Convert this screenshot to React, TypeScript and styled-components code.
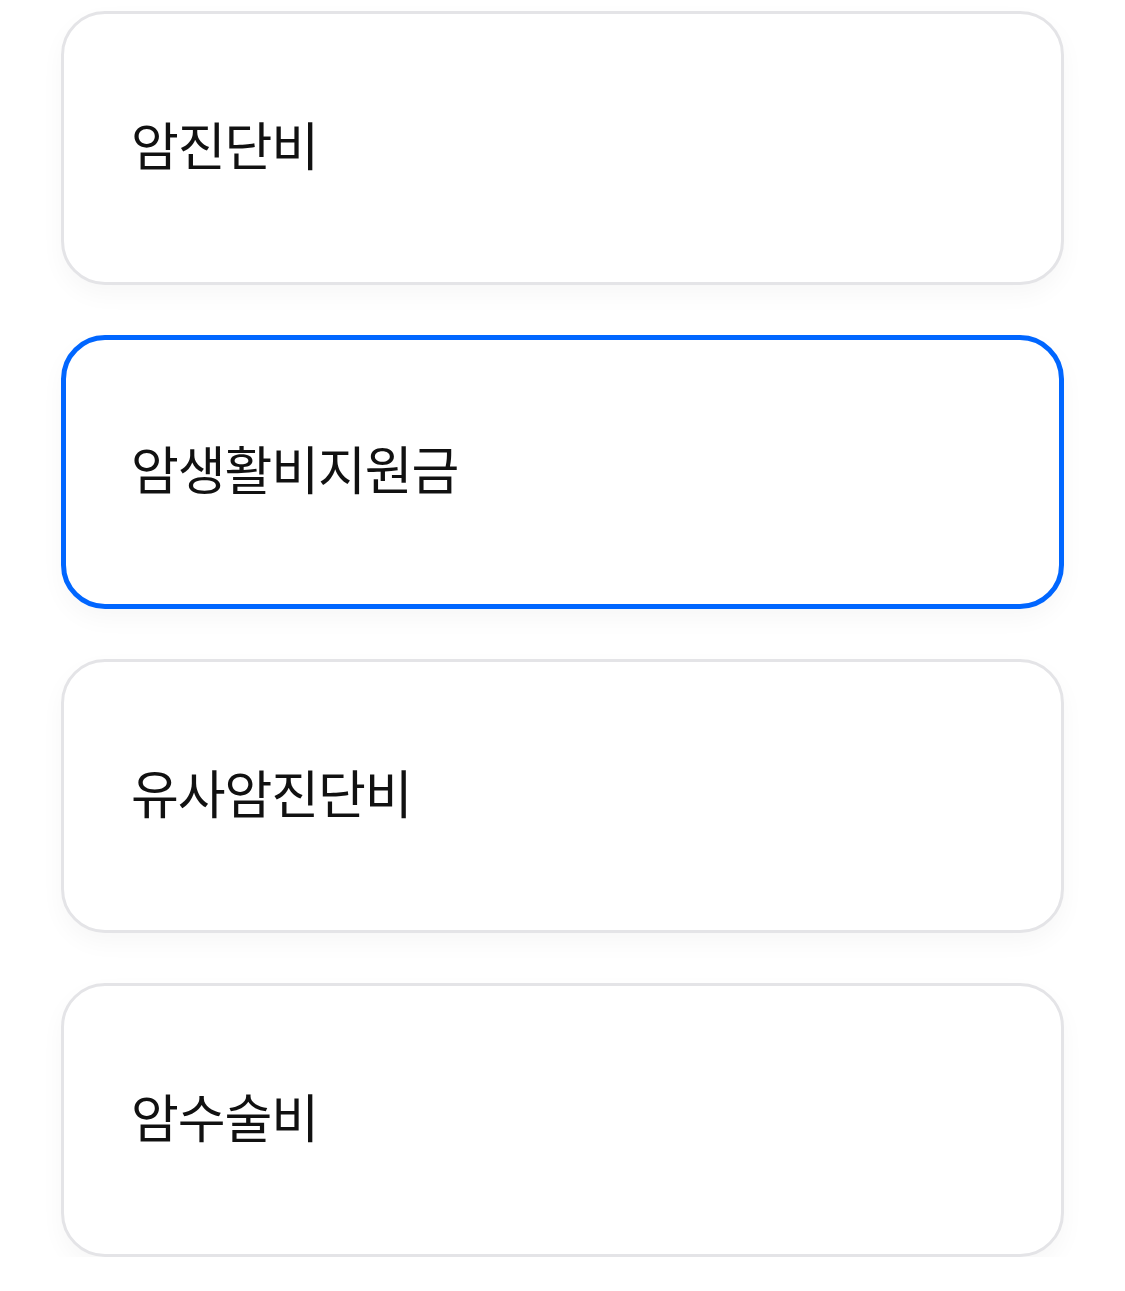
import React from "react";
import styled, { createGlobalStyle } from "styled-components";

const Global = createGlobalStyle`
  html, body { margin: 0; padding: 0; background: #ffffff; }
  body { font-family: "Noto Sans CJK KR", "Noto Sans", sans-serif; }
`;

const List = styled.div`
  display: flex;
  flex-direction: column;
  gap: 50px;
  padding: 11px 61px 0 61px;
  width: 1003px;
`;

const Card = styled.button<{ $selected?: boolean }>`
  box-sizing: border-box;
  height: 274px;
  display: flex;
  align-items: center;
  padding: 0 0 10px ${(p) => (p.$selected ? 65 : 67)}px;
  background: #ffffff;
  border: ${(p) => (p.$selected ? "5px solid #0066ff" : "3px solid #e4e4e7")};
  border-radius: 44px;
  box-shadow: 0 10px 24px rgba(0, 0, 0, 0.035);
  text-align: left;
  cursor: pointer;
  font-family: inherit;
`;

const Label = styled.span`
  font-size: 52px;
  letter-spacing: -1.1px;
  color: #111111;
  font-weight: 400;
`;

const items = ["암진단비", "암생활비지원금", "유사암진단비", "암수술비"];

export default function App() {
  return (
    <>
      <Global />
      <List>
        {items.map((t, i) => (
          <Card key={t} $selected={i === 1}>
            <Label>{t}</Label>
          </Card>
        ))}
      </List>
    </>
  );
}
